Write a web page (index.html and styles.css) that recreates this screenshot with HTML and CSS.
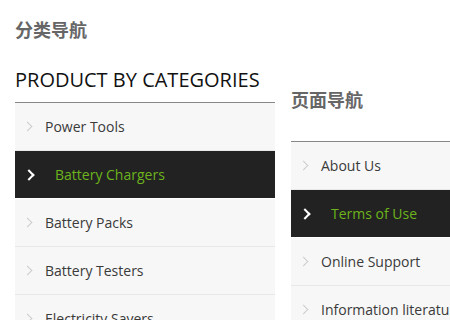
FILE: index.html
```html
<!DOCTYPE html>
<html lang="zh-CN">
<head>
  <meta charset="UTF-8" />
  <meta name="viewport" content="width=device-width, initial-scale=1.0"/>
  <title>导航</title>
  <link rel="stylesheet" href="styles.css">
</head>
<body>
  <div class="wrap">
    <div class="side">
      <h3 class="cn-title">分类导航</h3>
      <h2 class="en-title">PRODUCT BY CATEGORIES</h2>
      <ul class="menu">
        <li><span class="arrow"></span>Power Tools</li>
        <li class="on"><span class="arrow"></span>Battery Chargers</li>
        <li><span class="arrow"></span>Battery Packs</li>
        <li><span class="arrow"></span>Battery Testers</li>
        <li><span class="arrow"></span>Electricity Savers</li>
      </ul>
    </div>

    <div class="side side-right">
      <h3 class="cn-title">页面导航</h3>
      <ul class="menu">
        <li><span class="arrow"></span>About Us</li>
        <li class="on"><span class="arrow"></span>Terms of Use</li>
        <li><span class="arrow"></span>Online Support</li>
        <li><span class="arrow"></span>Information literature</li>
      </ul>
    </div>
  </div>
</body>
</html>
```

FILE: styles.css
```css
body {
  margin: 0;
  padding: 0 0 0 15px;
  background: #fff;
  font-family: "Open Sans", "Noto Sans CJK SC", sans-serif;
  overflow: hidden;
}
.wrap {
  display: flex;
  align-items: flex-start;
  gap: 16px;
  width: 600px;
}
.side {
  width: 260px;
  flex-shrink: 0;
}
.side-right {
  padding-top: 70px;
}
.cn-title {
  margin: 0;
  padding-top: 17px;
  height: 32px;
  font-family: "Noto Sans CJK SC", sans-serif;
  font-size: 18px;
  line-height: 24px;
  font-weight: bold;
  color: #666;
}
.en-title {
  margin: 0;
  padding-top: 17px;
  height: 36px;
  font-size: 20px;
  line-height: 28px;
  font-weight: normal;
  color: #111;
}
.side-right .cn-title {
  height: 54px;
}
.menu {
  list-style: none;
  margin: 0;
  padding: 0;
  border-top: 1px solid #888;
}
.menu li {
  display: flex;
  align-items: center;
  height: 47px;
  border-bottom: 1px solid #e8e8e8;
  background: #f7f7f7;
  font-size: 14px;
  color: #3a3a3a;
}
.menu li.on {
  background: #222;
  color: #6cb31c;
  border-bottom-color: #fff;
}
.arrow {
  width: 6px;
  height: 6px;
  margin: 0 14px 0 9px;
  border-top: 1px solid #ccc;
  border-right: 1px solid #ccc;
  transform: rotate(45deg);
}
.menu li.on .arrow {
  border-color: #fff;
  border-width: 2px;
  margin: 0 22px 0 10px;
}
```
